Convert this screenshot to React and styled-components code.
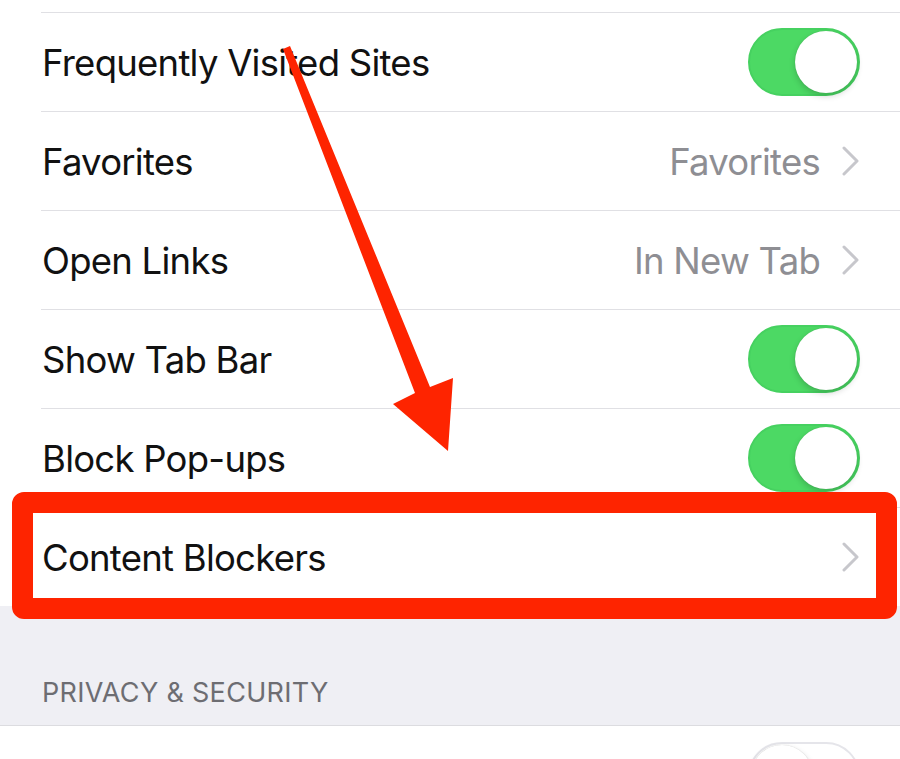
import React from 'react'
import styled, { createGlobalStyle } from 'styled-components'

const GlobalStyle = createGlobalStyle`
  html, body {
    margin: 0;
    padding: 0;
    background: #efeff4;
  }
  body {
    font-family: Inter, "Liberation Sans", Arial, sans-serif;
    -webkit-font-smoothing: antialiased;
  }
`

const Page = styled.div`
  position: relative;
  width: 900px;
  height: 759px;
  overflow: hidden;
  background: #efeff4;
`

const Group = styled.div`
  background: #fff;
  padding-top: ${p => p.stub || 0}px;
  border-top: ${p => p.topLine ? '1px solid #dcdce0' : 'none'};
`

const Row = styled.div`
  position: relative;
  display: flex;
  align-items: center;
  height: 98px;
  padding: 0 40px 0 42px;
  border-top: 1px solid transparent;
  &::before {
    content: '';
    display: ${p => p.first ? 'none' : 'block'};
    position: absolute;
    top: -1px;
    left: 41px;
    right: 0;
    height: 1px;
    background: #e0e0e4;
  }
`

const Label = styled.div`
  flex: 1;
  font-size: 36.5px;
  font-weight: 400;
  letter-spacing: -0.75px;
  color: #111;
  padding-top: 2px;
`

const Value = styled.div`
  font-size: 36.5px;
  letter-spacing: -0.75px;
  color: #8e8e93;
  padding-top: 2px;
  margin-right: 22px;
`

const Track = styled.div`
  position: relative;
  width: 112px;
  height: 68px;
  border-radius: 34px;
  box-sizing: border-box;
  background: ${p => p.on ? '#4cd964' : '#fff'};
  border: 2px solid ${p => p.on ? '#46d160' : '#e5e5ea'};
`

const Knob = styled.div`
  position: absolute;
  top: 1px;
  ${p => p.on ? 'right: 1px;' : 'left: 1px;'}
  width: 62px;
  height: 62px;
  border-radius: 50%;
  background: #fff;
  box-shadow: 0 3px 6px rgba(0, 0, 0, 0.18), 0 0 1px rgba(0, 0, 0, 0.2);
`

const ChevronIcon = styled.svg`
  width: 18px;
  height: 30px;
  flex: none;
`

const SectionGap = styled.div`
  height: 119px;
  display: flex;
  align-items: flex-end;
  box-sizing: border-box;
  padding: 0 0 16px 42px;
  font-size: 27px;
  letter-spacing: 0.3px;
  color: #6d6d72;
`

const Highlight = styled.div`
  position: absolute;
  top: -16px;
  bottom: -13px;
  left: 12px;
  right: 3px;
  border: 21px solid #fe2400;
  border-radius: 12px;
  pointer-events: none;
`

const Overlay = styled.svg`
  position: absolute;
  left: 0;
  top: 0;
  pointer-events: none;
`

function Toggle({ on }) {
  return (
    <Track on={on}>
      <Knob on={on} />
    </Track>
  )
}

function Chevron() {
  return (
    <ChevronIcon viewBox='0 0 18 30'>
      <polyline points='2,2 15,15 2,28' fill='none' stroke='#c7c7cc' strokeWidth='3' strokeLinecap='round' strokeLinejoin='round' />
    </ChevronIcon>
  )
}

const rows = [
  { label: 'Frequently Visited Sites', toggle: true },
  { label: 'Favorites', value: 'Favorites' },
  { label: 'Open Links', value: 'In New Tab' },
  { label: 'Show Tab Bar', toggle: true },
  { label: 'Block Pop-ups', toggle: true },
  { label: 'Content Blockers', chevron: true, highlight: true }
]

export default function App() {
  return (
    <Page>
      <GlobalStyle />
      <Group stub={12}>
        {rows.map(r => (
          <Row key={r.label}>
            <Label>{r.label}</Label>
            {r.value && <Value>{r.value}</Value>}
            {(r.value || r.chevron) && <Chevron />}
            {r.toggle && <Toggle on />}
            {r.highlight && <Highlight />}
          </Row>
        ))}
      </Group>
      <SectionGap>PRIVACY &amp; SECURITY</SectionGap>
      <Group topLine>
        <Row first>
          <Label />
          <Toggle on={false} />
        </Row>
      </Group>
      <Overlay width='900' height='759'>
        <polygon
          points='283,49 415,393 393,404 448,451 453,378 430,387 290,46'
          fill='#fe2400'
        />
      </Overlay>
    </Page>
  )
}
